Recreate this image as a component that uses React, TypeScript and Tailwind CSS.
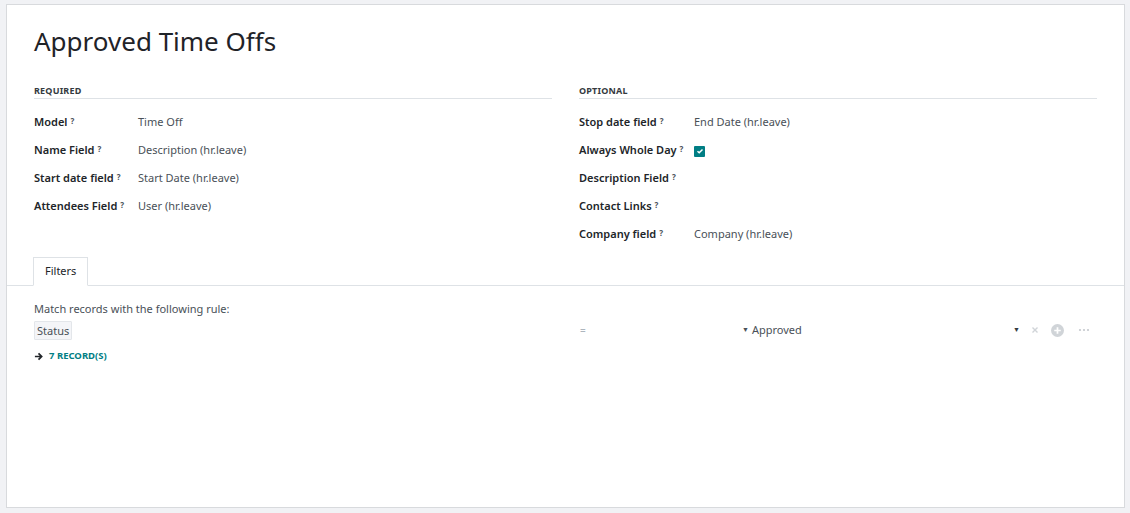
import React from "react";

const font = { fontFamily: '"Noto Sans", "Open Sans", sans-serif' };

function Help() {
  return <sup className="ml-[3px] text-[8px] font-bold text-[#495057] relative -top-[2px]">?</sup>;
}

function Row({ label, value, children }: { label: string; value?: string; children?: React.ReactNode }) {
  return (
    <div className="flex items-center h-[28px]">
      <div className="w-[104px] shrink-0 text-[11px] font-semibold text-[#212529]">
        {label}
        <Help />
      </div>
      <div className="text-[11px] text-[#495057]">{value}{children}</div>
    </div>
  );
}

export default function App() {
  return (
    <div className="w-[1130px] h-[513px] bg-[#f1f2f5] pt-[4px] pl-[6px] pr-[5px] pb-[5px]" style={font}>
      <div className="h-[504px] bg-white border border-[#d8dadd] flex flex-col">
        <div className="px-[27px] pt-[20px]">
          <h1 className="text-[26px] leading-[32px] text-[#1f2328] font-normal">Approved Time Offs</h1>
          <div className="flex gap-[27px] mt-[27px]">
            <div className="flex-1">
              <div className="text-[9px] font-bold tracking-[0.2px] text-[#343a40] border-b border-[#dee2e6] mb-[10px]">REQUIRED</div>
              <Row label="Model" value="Time Off" />
              <Row label="Name Field" value="Description (hr.leave)" />
              <Row label="Start date field" value="Start Date (hr.leave)" />
              <Row label="Attendees Field" value="User (hr.leave)" />
            </div>
            <div className="flex-1">
              <div className="text-[9px] font-bold tracking-[0.2px] text-[#343a40] border-b border-[#dee2e6] mb-[10px]">OPTIONAL</div>
              <div className="[&>div>div:first-child]:w-[115px]">
                <Row label="Stop date field" value="End Date (hr.leave)" />
                <Row label="Always Whole Day">
                  <span className="inline-flex w-[11px] h-[11px] bg-[#017e84] rounded-[1px] items-center justify-center align-middle">
                    <svg width="8" height="8" viewBox="0 0 8 8"><path d="M1.5 4.2 L3.2 5.8 L6.5 2.5" stroke="white" strokeWidth="1.5" fill="none" /></svg>
                  </span>
                </Row>
                <Row label="Description Field" />
                <Row label="Contact Links" />
                <Row label="Company field" value="Company (hr.leave)" />
              </div>
            </div>
          </div>
        </div>
        <div className="mt-[8px] border-b border-[#dee2e6] px-[26px] flex">
          <div className="h-[29px] px-[11px] flex items-center text-[11px] text-[#212529] border border-[#dee2e6] border-b-white -mb-px bg-white">Filters</div>
        </div>
        <div className="px-[27px] pt-[15px]">
          <div className="text-[11px] text-[#495057]">Match records with the following rule:</div>
          <div className="flex items-center mt-[2px] h-[20px]">
            <div className="w-[546px]">
              <span className="inline-block px-[2px] h-[19px] leading-[18px] text-[11px] text-[#495057] bg-[#f4f5f8] border border-[#e3e6ea] rounded-[1px]">Status</span>
            </div>
            <div className="w-[162px] text-[10px] text-[#adb5bd] pt-[2px]">=</div>
            <div className="flex-1 flex items-center text-[11px] text-[#495057] pt-[2px]">
              <span className="text-[7px] mr-[3px] text-[#495057]">▼</span>Approved
            </div>
            <div className="flex items-center pr-[7px] pt-[2px] text-[#c5c9ce]">
              <span className="text-[7px] text-[#343a40]">▼</span>
              <svg className="ml-[11px]" width="8" height="8" viewBox="0 0 8 8"><path d="M1.5 1.5 L6.5 6.5 M6.5 1.5 L1.5 6.5" stroke="#d0d4d8" strokeWidth="1.4" /></svg>
              <svg className="ml-[12px]" width="13" height="13" viewBox="0 0 12 12"><circle cx="6" cy="6" r="6" fill="#d0d4d8" /><path d="M6 3 V9 M3 6 H9" stroke="white" strokeWidth="1.6" /></svg>
              <svg className="ml-[14px]" width="12" height="4" viewBox="0 0 12 4"><circle cx="2" cy="2" r="1.1" fill="#c5c9ce" /><circle cx="6" cy="2" r="1.1" fill="#c5c9ce" /><circle cx="10" cy="2" r="1.1" fill="#c5c9ce" /></svg>
            </div>
          </div>
          <div className="flex items-center mt-[10px] gap-[6px]">
            <svg width="9" height="9" viewBox="0 0 10 10"><path d="M1 5 H8 M5 1.5 L8.5 5 L5 8.5" stroke="#212529" strokeWidth="1.9" fill="none" /></svg>
            <span className="text-[9.5px] font-bold text-[#017e84]">7 RECORD(S)</span>
          </div>
        </div>
      </div>
    </div>
  );
}
